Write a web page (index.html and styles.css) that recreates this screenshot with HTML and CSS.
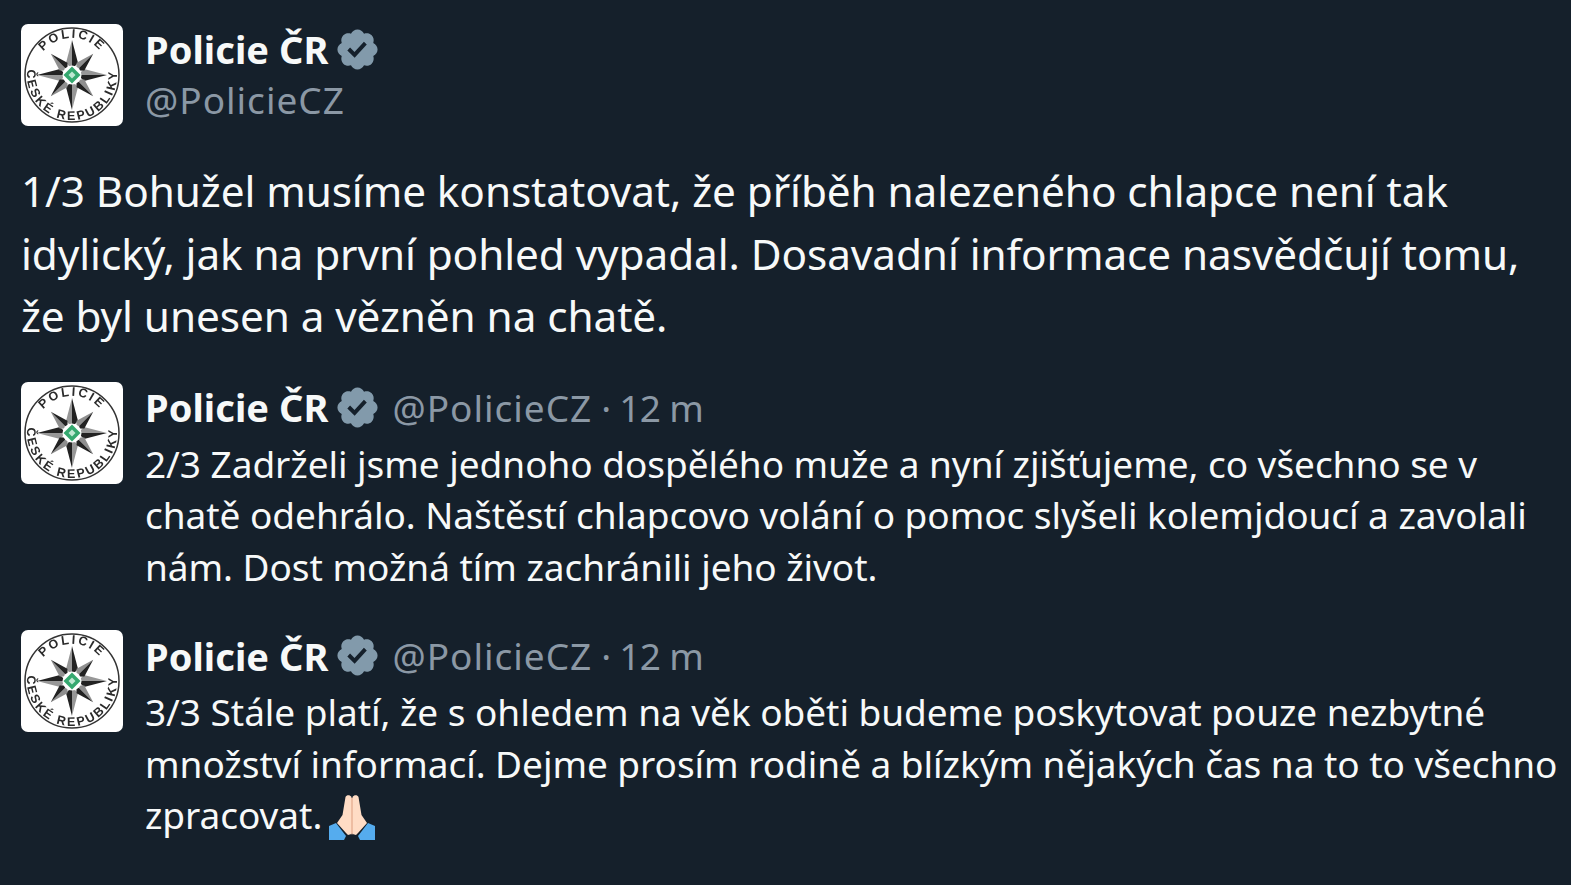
FILE: index.html
```html
<!DOCTYPE html>
<html lang="cs">
<head>
<meta charset="utf-8">
<title>Policie ČR</title>
<link rel="stylesheet" href="styles.css">
</head>
<body>
<svg class="defs" width="0" height="0" aria-hidden="true">
  <defs>
    <symbol id="badge" viewBox="0 0 24 24">
      <path fill="#829aab" fill-rule="evenodd" d="M22.25 12c0-1.43-.88-2.67-2.19-3.34.46-1.39.2-2.9-.81-3.91s-2.52-1.27-3.91-.81c-.66-1.31-1.91-2.19-3.34-2.19s-2.67.88-3.33 2.19c-1.4-.46-2.91-.2-3.92.81s-1.26 2.52-.8 3.91c-1.31.67-2.2 1.91-2.2 3.34s.89 2.67 2.2 3.34c-.46 1.39-.21 2.9.8 3.91s2.52 1.26 3.91.81c.67 1.31 1.91 2.19 3.34 2.19s2.68-.88 3.34-2.19c1.39.45 2.9.2 3.91-.81s1.27-2.52.81-3.91c1.31-.67 2.19-1.91 2.19-3.34zm-11.71 4.2L6.8 12.46l1.41-1.42 2.26 2.26 4.8-5.23 1.47 1.36-6.2 6.77z"/>
    </symbol>
    <g id="ray-long">
      <polygon points="50,15 44,38 50,44" fill="#979797"/>
      <polygon points="50,15 56,38 50,44" fill="#222"/>
    </g>
    <g id="ray-short">
      <polygon points="50,20 44.500,38 50,44" fill="#8f8f8f"/>
      <polygon points="50,20 55.500,38 50,44" fill="#222"/>
    </g>
    <symbol id="crest" viewBox="0 0 102 102">
      <rect width="102" height="102" rx="7" fill="#fff"/>
      <g transform="translate(1 1)">
        <circle cx="50" cy="50" r="47" fill="none" stroke="#333" stroke-width="1.5"/>
        <use href="#ray-long"/>
        <use href="#ray-long" transform="rotate(90 50 50)"/>
        <use href="#ray-long" transform="rotate(180 50 50)"/>
        <use href="#ray-long" transform="rotate(270 50 50)"/>
        <use href="#ray-short" transform="rotate(45 50 50)"/>
        <use href="#ray-short" transform="rotate(135 50 50)"/>
        <use href="#ray-short" transform="rotate(225 50 50)"/>
        <use href="#ray-short" transform="rotate(315 50 50)"/>
        <circle cx="50" cy="50" r="9.500" fill="#fff"/>
        <polygon points="50,41.500 58.500,50 50,58.500 41.500,50" fill="#35a86f"/>
        <polygon points="50,46.500 53.500,50 50,53.500 46.500,50" fill="#bfe8d2"/>
        <path id="arc-top" d="M17.300 32.600 A37 37 0 0 1 82.700 32.600" fill="none"/>
        <path id="arc-bot" d="M7.700 34.600 A45 45 0 1 0 92.300 34.600" fill="none"/>
        <text class="crest-text" text-anchor="middle"><textPath href="#arc-top" startOffset="50%">POLICIE</textPath></text>
        <text class="crest-text" text-anchor="middle"><textPath href="#arc-bot" startOffset="50%">ČESKÉ REPUBLIKY</textPath></text>
      </g>
    </symbol>
  </defs>
</svg>

<main class="thread">
  <header class="author">
    <svg class="avatar"><use href="#crest"/></svg>
    <div class="author-lines">
      <div class="name-row">
        <span class="name">Policie ČR</span>
        <svg class="badge"><use href="#badge"/></svg>
      </div>
      <div class="handle">@PolicieCZ</div>
    </div>
  </header>

  <p class="lead">1/3 Bohužel musíme konstatovat, že příběh nalezeného chlapce není tak<br>idylický, jak na první pohled vypadal. Dosavadní informace nasvědčují tomu,<br>že byl unesen a vězněn na chatě.</p>

  <article class="reply">
    <svg class="avatar"><use href="#crest"/></svg>
    <div class="reply-body">
      <div class="name-row">
        <span class="name">Policie ČR</span>
        <svg class="badge"><use href="#badge"/></svg>
        <span class="meta"><span class="meta-handle">@PolicieCZ</span> · 12 m</span>
      </div>
      <p class="reply-text">2/3 Zadrželi jsme jednoho dospělého muže a nyní zjišťujeme, co všechno se v<br>chatě odehrálo. Naštěstí chlapcovo volání o pomoc slyšeli kolemjdoucí a zavolali<br>nám. Dost možná tím zachránili jeho život.</p>
    </div>
  </article>

  <article class="reply">
    <svg class="avatar"><use href="#crest"/></svg>
    <div class="reply-body">
      <div class="name-row">
        <span class="name">Policie ČR</span>
        <svg class="badge"><use href="#badge"/></svg>
        <span class="meta"><span class="meta-handle">@PolicieCZ</span> · 12 m</span>
      </div>
      <p class="reply-text">3/3 Stále platí, že s ohledem na věk oběti budeme poskytovat pouze nezbytné<br>množství informací. Dejme prosím rodině a blízkým nějakých čas na to to všechno<br>zpracovat.<svg class="emoji" viewBox="0 0 46 45" role="img" aria-label="🙏🏻">
        <path fill="#55acee" d="M0 31 L7 28 L17 41 L15 45 L0 45 Z"/>
        <path fill="#55acee" d="M46 31 L39 28 L29 41 L31 45 L46 45 Z"/>
        <path fill="#ffdcc5" d="M22.500 2 C21 -0.500 17.500 -0.500 16.500 2 L13.500 20 L8 28 L17 38 L19 40 L22.500 39 Z"/>
        <path fill="#ffdcc5" d="M23.500 2 C25 -0.500 28.500 -0.500 29.500 2 L32.500 20 L38 28 L29 38 L27 40 L23.500 39 Z"/>
        <path fill="#eebda2" d="M22 3 L24 3 L24 38 L23 40 L22 38 Z"/>
      </svg></p>
    </div>
  </article>
</main>
</body>
</html>
```

FILE: styles.css
```css
* { box-sizing: border-box; }

html, body {
  margin: 0;
  height: 100%;
}

body {
  background: #15202b;
  color: #f7f9f9;
  font-family: "Noto Sans", "Open Sans", "Liberation Sans", sans-serif;
  overflow: hidden;
}

.defs { display: block; height: 0; }

.thread {
  padding: 24px 0 0 21px;
}

.avatar {
  width: 102px;
  height: 102px;
  flex: none;
  display: block;
  filter: blur(0.4px);
}

.crest-text {
  font: 700 12.500px "Liberation Sans", sans-serif;
  letter-spacing: 2.200px;
  fill: #2a2a2a;
}

.author {
  display: flex;
  gap: 22px;
}

.author-lines {
  display: flex;
  flex-direction: column;
}

.name-row {
  display: flex;
  align-items: center;
  height: 50px;
}

.name {
  font-size: 38px;
  font-weight: 700;
  letter-spacing: 0.050px;
  white-space: nowrap;
}

.badge {
  width: 47px;
  height: 47px;
  margin-left: 6px;
  flex: none;
}

.handle {
  height: 51px;
  line-height: 51px;
  font-size: 37px;
  letter-spacing: 1px;
  color: #8b98a5;
}

.lead {
  margin: 34px 0 0;
  font-size: 42.300px;
  line-height: 62.500px;
  letter-spacing: -0.080px;
  white-space: nowrap;
}

.reply {
  display: flex;
  gap: 22px;
  margin-top: 34px;
}

.reply + .reply {
  margin-top: 38px;
}

.reply-body {
  min-width: 0;
}

.reply .name-row {
  height: 51px;
}

.meta {
  margin-left: 11px;
  font-size: 37px;
  letter-spacing: -0.700px;
  color: #8b98a5;
  white-space: nowrap;
}

.meta-handle {
  letter-spacing: 1px;
}

.reply-text {
  margin: 5px 0 0;
  font-size: 37px;
  line-height: 51.500px;
  letter-spacing: -0.040px;
  white-space: nowrap;
}

.emoji {
  width: 46px;
  height: 45px;
  vertical-align: -11px;
  margin-left: 7px;
}
```
